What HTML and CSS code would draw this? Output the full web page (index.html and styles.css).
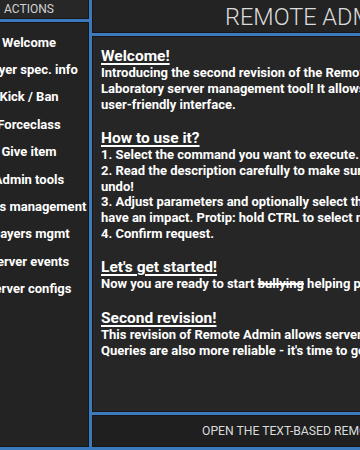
FILE: index.html
```html
<!DOCTYPE html>
<html lang="en">
<head>
  <meta charset="UTF-8">
  <title>Remote Admin</title>
  <meta name="viewport" content="width=device-width, initial-scale=1.0">
  <link rel="stylesheet" href="styles.css">
</head>
<body>
  <div class="ra">
    <aside class="side">
      <div class="side-head">ACTIONS</div>
      <nav class="side-list">
        <div class="item">Welcome</div>
        <div class="item">Player spec. info</div>
        <div class="item">Kick / Ban</div>
        <div class="item">Forceclass</div>
        <div class="item">Give item</div>
        <div class="item">Admin tools</div>
        <div class="item">Doors management</div>
        <div class="item">Players mgmt</div>
        <div class="item">Server events</div>
        <div class="item">Server configs</div>
      </nav>
    </aside>

    <main class="panel">
      <header class="title">REMOTE ADMIN</header>

      <section class="content">
        <div class="block">
          <h2>Welcome!</h2>
          <p>Introducing the second revision of the Remote Admin - SCP: Secret<br>
          Laboratory server management tool! It allows you to manage your server in a<br>
          user-friendly interface.</p>
        </div>

        <div class="block">
          <h2>How to use it?</h2>
          <p>1. Select the command you want to execute.<br>
          2. Read the description carefully to make sure you know what it does - some actions are impossible to<br>
          undo!<br>
          3. Adjust parameters and optionally select the players. Some commands require players, otherwise they don't<br>
          have an impact. Protip: hold CTRL to select multiple players.<br>
          4. Confirm request.</p>
        </div>

        <div class="block">
          <h2>Let's get started!</h2>
          <p>Now you are ready to start <s>bullying</s> helping players!</p>
        </div>

        <div class="block">
          <h2>Second revision!</h2>
          <p>This revision of Remote Admin allows server configuration on the fly.<br>
          Queries are also more reliable - it's time to get rid of the text console!</p>
        </div>
      </section>

      <footer class="console">OPEN THE TEXT-BASED REMOTE ADMIN CONSOLE</footer>
    </main>
  </div>
</body>
</html>
```

FILE: styles.css
```css
html, body {
  margin: 0;
  padding: 0;
  height: 450px;
  overflow: hidden;
  background: #3b7bbd;
  font-family: Roboto, "Liberation Sans", sans-serif;
}

.ra {
  display: grid;
  grid-template-columns: 120px 600px;
  column-gap: 3px;
  height: 447px;
  margin-left: -31px;
}

.side {
  display: flex;
  flex-direction: column;
  gap: 3px;
}

.side-head {
  height: 19px;
  box-sizing: border-box;
  background: #272727;
  border: 1px solid #171717;
  border-top: none;
  color: #d2d2d2;
  font-size: 12px;
  line-height: 19px;
  text-align: center;
}

.side-list {
  flex: 1;
  background: #232323;
  border: 1px solid #171717;
  padding-top: 5.5px;
}

.item {
  color: #fff;
  font-weight: bold;
  font-size: 13px;
  line-height: 27.4px;
  text-align: center;
  white-space: nowrap;
}

.panel {
  display: flex;
  flex-direction: column;
  gap: 3px;
  min-width: 0;
}

.title {
  height: 33px;
  box-sizing: border-box;
  background: #232323;
  border: 1px solid #171717;
  border-top: none;
  padding-left: 132px;
  color: #dcdcdc;
  font-weight: 300;
  font-size: 23.5px;
  line-height: 34px;
  white-space: nowrap;
}

.content {
  flex: 1;
  background: #262626;
  border: 1px solid #171717;
  padding: 10px 0 0 8px;
  color: #fff;
  white-space: nowrap;
  overflow: hidden;
}

.block + .block {
  margin-top: 16.6px;
}

h2 {
  margin: 0;
  font-size: 15.5px;
  line-height: 18px;
  font-weight: bold;
  text-decoration: underline;
  text-decoration-thickness: 1.5px;
  text-underline-offset: 2px;
}

p {
  margin: 0;
  font-size: 13px;
  line-height: 15.8px;
  font-weight: bold;
}

s {
  text-decoration-thickness: 1.5px;
}

.console {
  height: 32px;
  box-sizing: border-box;
  background: #1f1f1f;
  border: 1px solid #171717;
  padding-left: 109px;
  color: #dadada;
  font-size: 12.2px;
  line-height: 30px;
  white-space: nowrap;
}
```
